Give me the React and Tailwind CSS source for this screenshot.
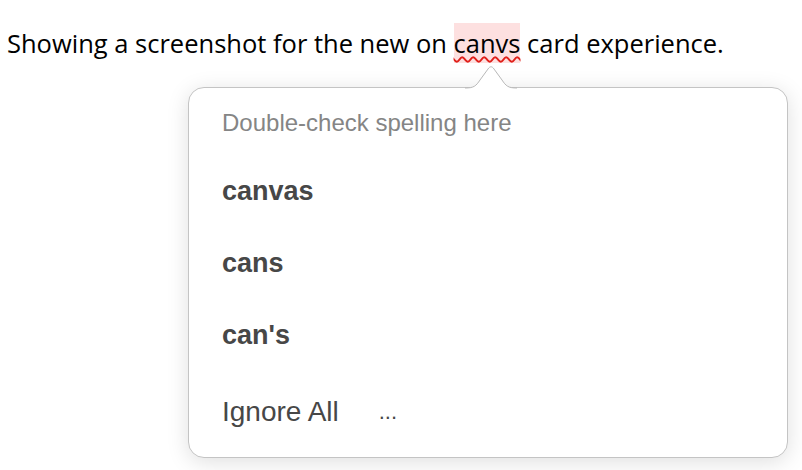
function Arrow() {
  return (
    <svg
      className="absolute left-[276px] top-[-23px]"
      width="52"
      height="24"
      viewBox="0 0 52 24"
    >
      <path
        d="M0 23 C9 23 11 21 15 15 L23 4 C25 1 27 1 29 4 L37 15 C41 21 43 23 52 23 L52 24 L0 24 Z"
        fill="#ffffff"
      />
      <path
        d="M0 23 C9 23 11 21 15 15 L23 4 C25 1 27 1 29 4 L37 15 C41 21 43 23 52 23"
        fill="none"
        stroke="#b8b8b8"
        strokeWidth="1"
      />
    </svg>
  );
}

function Item({ children, bold = true, className = "" }) {
  return (
    <div
      className={
        "h-[72px] flex items-center text-[#474747] " +
        (bold ? "font-bold text-[27px] " : "text-[28px] ") +
        className
      }
    >
      {children}
    </div>
  );
}

export default function App() {
  return (
    <div className="w-[802px] h-[470px] bg-white overflow-hidden relative">
      <p
        className="pl-[7px] pt-[24px] text-[25.5px] leading-[38px] text-black whitespace-nowrap"
        style={{ fontFamily: '"Open Sans", sans-serif' }}
      >
        Showing a screenshot for the new on{" "}
        <span className="bg-[#fde0e0] py-[3px] underline decoration-wavy decoration-[#e0201a] decoration-[1.5px] underline-offset-[3px]">
          canvs
        </span>{" "}
        card experience.
      </p>

      <div
        className="relative ml-[188px] mt-[25px] w-[600px] h-[371px] bg-white rounded-[16px] border border-[#c4c4c4] shadow-[0_4px_22px_rgba(0,0,0,0.13)] pl-[33px] pt-[17px]"
        style={{ fontFamily: '"Liberation Sans", Arial, sans-serif' }}
      >
        <Arrow />
        <div className="h-[36px] flex items-center text-[24px] text-[#858585]">
          Double-check spelling here
        </div>
        <Item className="mt-[14px]">canvas</Item>
        <Item>cans</Item>
        <Item>can's</Item>
        <Item bold={false} className="mt-[5px]">
          <span>Ignore All</span>
          <span className="ml-[40px] text-[22px] leading-none">...</span>
        </Item>
      </div>
    </div>
  );
}
